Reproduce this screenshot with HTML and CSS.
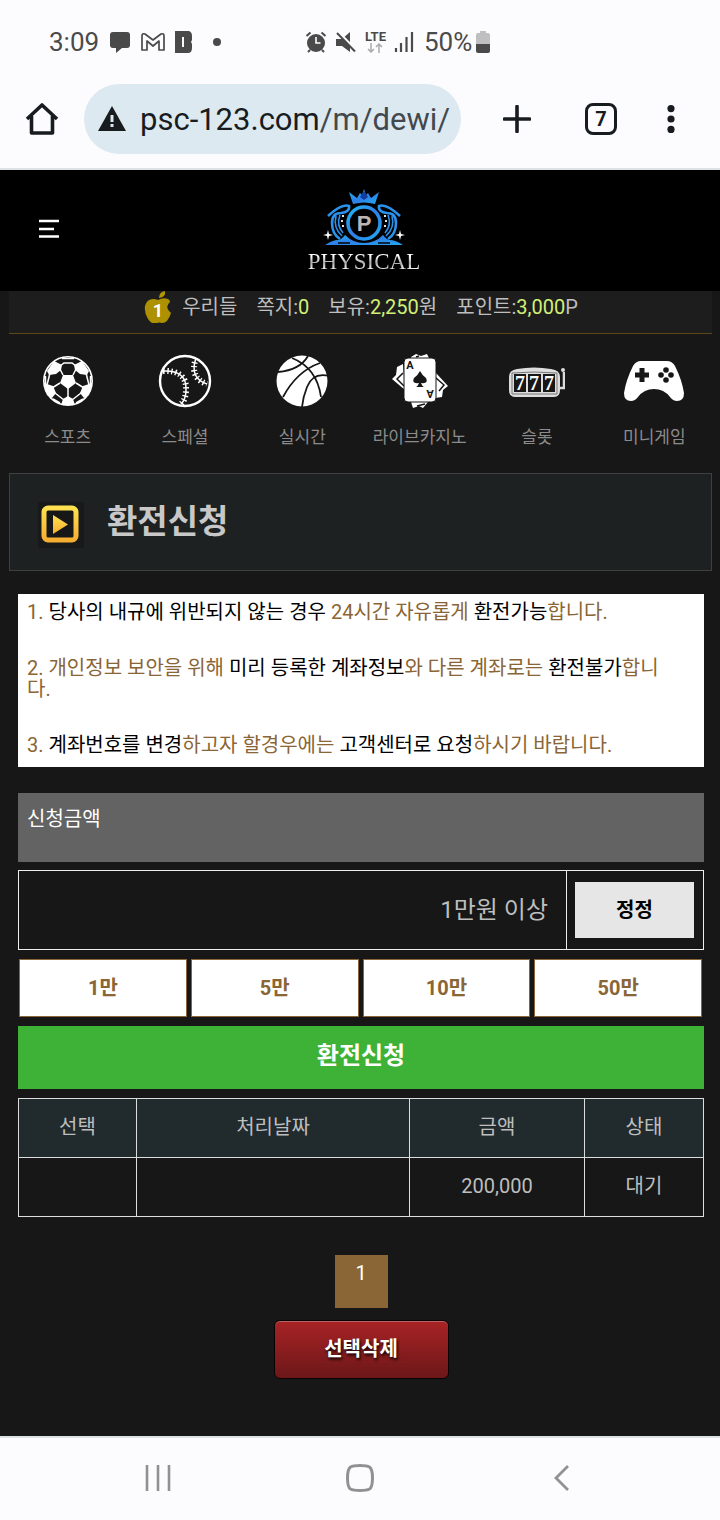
FILE: index.html
```
<!DOCTYPE html>
<html lang="ko">
<head>
	<meta charset="UTF-8" />
	<meta name="viewport" content="width=device-width, initial-scale=1" />
	<title>환전신청</title>
	<link rel="stylesheet" href="styles.css">
</head>
<body>
	<div class="status">
		<div class="status-left">
			<span class="time">3:09</span>
			<svg width="22" height="22" viewBox="0 0 22 22"><path d="M4 1h14q3 0 3 3v10q0 3-3 3h-5l-6 5v-5H4q-3 0-3-3V4q0-3 3-3z" fill="#4a4a4a"/></svg>
			<svg width="24" height="20" viewBox="0 0 24 20"><path d="M1 18V4q0-3 3-2l8 6 8-6q3-1 3 2v14h-5V9l-6 5-6-5v9z" fill="none" stroke="#4a4a4a" stroke-width="1.7" stroke-linejoin="round"/></svg>
			<svg width="18" height="24" viewBox="0 0 18 24"><path d="M0 1h14q3 1 3 5v4l-1 2 1 2v4q0 5-4 5H0zM7 7v10h2V7z" fill="#4a4a4a" fill-rule="evenodd"/></svg>
			<i class="dot"></i>
		</div>
		<div class="status-right">
			<svg width="22" height="22" viewBox="0 0 22 22" fill="none" stroke="#4a4a4a"><circle cx="11" cy="12" r="9" fill="#4a4a4a" stroke="none"/><path d="M1.5 5l4-3.5M20.5 5l-4-3.5M5 19l-2 2M17 19l2 2" stroke-width="2"/><path d="M11 6v6h4.500" stroke="#fff" stroke-width="1.6"/></svg>
			<svg width="22" height="22" viewBox="0 0 22 22"><path d="M1 8h6l8-7v20l-8-6H1z" fill="#4a4a4a"/><path d="M2 0l20 20.500" stroke="#fcfcfe" stroke-width="3"/><path d="M2 2l18 18.500" stroke="#4a4a4a" stroke-width="2"/></svg>
			<span class="lte">LTE<svg width="16" height="10" viewBox="0 0 16 10"><path d="M4 0v9M1 6l3 3 3-3M12 10V1M9 4l3-3 3 3" fill="none" stroke="#aaa" stroke-width="1.5"/></svg></span>
			<svg width="20" height="20" viewBox="0 0 20 20"><path d="M2 16v4M7 11v9M12.500 5v15M18 0v20" stroke="#4a4a4a" stroke-width="2.2"/></svg>
			<span class="battery-text">50%</span>
			<svg class="battery" width="14" height="22" viewBox="0 0 14 22"><path d="M4 0h6v2h2q2 0 2 2v9H0V4q0-2 2-2h2z" fill="#bfbfc1"/><path d="M0 13h14v7q0 2-2 2H2q-2 0-2-2z" fill="#4a4a4a"/></svg>
		</div>
	</div>
	<div class="browser">
		<button class="tool" aria-label="홈"><svg width="34" height="34" viewBox="0 0 34 34"><path d="M2 17L17 3l15 14M6.500 14v17h21V14" fill="none" stroke="#181c1f" stroke-width="3.6" stroke-linejoin="round"/></svg></button>
		<div class="address">
			<svg width="28" height="26" viewBox="0 0 28 26"><path d="M14 0l14 25H0z" fill="#181c1f"/><path d="M14 9v7M14 18v3" stroke="#dde9f0" stroke-width="3"/></svg>
			<span>psc-123.com<em>/m/dewi/</em></span>
		</div>
		<button class="tool plus" aria-label="새 탭"><svg width="28" height="28" viewBox="0 0 28 28"><path d="M14 1.500v25M1.500 14h25" stroke="#181c1f" stroke-width="3.6" stroke-linecap="round"/></svg></button>
		<button class="tool tabs">7</button>
		<button class="tool more" aria-label="메뉴"><svg width="8" height="28" viewBox="0 0 8 28" fill="#181c1f"><circle cx="4" cy="3.6" r="3.6"/><circle cx="4" cy="14" r="3.6"/><circle cx="4" cy="24.4" r="3.6"/></svg></button>
	</div>

	<div class="page">
		<div class="header">
			<button class="menu" aria-label="전체메뉴"><svg width="22" height="20" viewBox="0 0 22 20"><path d="M1 2h20M1 10h15M1 17.500h20" stroke="#fff" stroke-width="2.6"/></svg></button>
			<a href="#" class="logo">
				<svg width="84" height="60" viewBox="0 0 84 60" fill="none">
					<defs><linearGradient id="blue" x1="0" y1="0" x2="1" y2="1"><stop offset="0" stop-color="#20b8f4"/><stop offset=".5" stop-color="#2f7fe8"/><stop offset="1" stop-color="#22a9f0"/></linearGradient></defs>
					<path d="M31 17l-4-12 8 6 3-5 2 2 2-6 2 6 2-2 3 5 8-6-4 12q-11-3-22 0z" fill="url(#blue)"/>
					<path d="M38 10l4-6 4 6-4 3z" fill="#123c9c"/>
					<circle cx="42" cy="36" r="16" stroke="url(#blue)" stroke-width="3.5"/>
					<path d="M6 29Q20 16 27 19q1 6-8 7-9 0-9 10 0 11 8 16M78 29Q64 16 57 19q-1 6 8 7 9 0 9 10 0 11-8 16" stroke="#2b92ec" stroke-width="2.6"/>
					<path d="M14 29q-3 12 6 20M18 28q-4 10 3 18M70 29q3 12-6 20M66 28q4 10-3 18" stroke="#2b92ec" stroke-width="1.6"/>
					<path d="M3 58q8-5 13-5 3 0 7-5 8 8 19 8t19-8q4 5 7 5 5 0 13 5z" fill="url(#blue)"/>
					<path d="M16 56h12M68 56H56" stroke="#000" stroke-width="1.4"/>
					<path d="M6 43l1 4 4 1-4 1-1 4-1-4-4-1 4-1zM78 43l1 4 4 1-4 1-1 4-1-4-4-1 4-1z" fill="#fff"/>
					<path d="M21 28v2M20 33v2M21 38v2M63 28v2M64 33v2M63 38v2" stroke="#ddd" stroke-width="2"/>
					<text x="42" y="44" class="logo-p">P</text>
				</svg>
				<span class="logo-text">PHYSICAL</span>
			</a>
		</div>

		<div class="user">
			<svg width="30" height="32" viewBox="0 0 30 32"><path d="M16 7q0-6 6-7 1 6-6 7z" fill="#b39700"/><path d="M15 9q5-3 10-1 2 1 2 3-6 5 1 11-3 10-9 10-3-1-5 0-5 2-9-4-4-7-3-13 2-7 8-7 3 0 5 1z" fill="#ae9100"/><text x="15" y="26" class="level">1</text></svg>
			<span>우리들</span>
			<span>쪽지:<b>0</b></span>
			<span>보유:<b>2,250</b>원</span>
			<span>포인트:<b>3,000</b>P</span>
		</div>

		<div class="nav">
			<a href="#">
				<svg width="54" height="54" viewBox="0 0 54 54"><circle cx="27" cy="27" r="24.2" fill="#171717" stroke="#fff" stroke-width="1.6"/><path d="M22 21h10l3 8-8 6-8-6zM13 7l8 4-1 5-5 4-7 1-2-4zM41 7l-8 4 1 5 5 4 7 1 2-4zM3 29l9 3 3 7-4 5-5-3zM51 29l-9 3-3 7 4 5 5-3zM22 45l5-3 5 3 2 6H20z" fill="#fff"/><path d="M22 21l-3-6M32 21l3-6M19 29l-8 5M35 29l8 5M27 34v10M19 12l4-3h8l4 3M9 19L6 31M45 19l3 12M14 39l9 7M40 39l-9 7M21 4.500h12M4.500 22v9M49.500 22v9M12 45l7 4M42 45l-7 4" fill="none" stroke="#fff" stroke-width="1.5"/></svg>
				<span>스포츠</span>
			</a>
			<a href="#">
				<svg width="54" height="54" viewBox="0 0 54 54" fill="none" stroke="#fff"><circle cx="27" cy="27" r="25" stroke-width="2.4"/><path d="M5 17q24-1 23 19 0 9-5 14M38 4q-7 20 11 26" stroke-width="1.5"/><path d="M5 17q24-1 23 19 0 9-5 14M38 4q-7 20 11 26" stroke-width="6" stroke-dasharray="1.4 2.6"/></svg>
				<span>스페셜</span>
			</a>
			<a href="#">
				<svg width="54" height="54" viewBox="0 0 54 54"><circle cx="27" cy="27" r="25.500" fill="#fff"/><path d="M17 4q25 10 29 39M3 18q22-2 30-16M8 43Q22 17 45 9M27 53q1-10 5-20 6-15 22-11" fill="none" stroke="#171717" stroke-width="1.8"/></svg>
				<span>실시간</span>
			</a>
			<a href="#">
				<svg width="56" height="54" viewBox="0 0 56 54"><path d="M11 10l-6 3-1 8-4 4 13 11zM44 19l12 13-5 4-1 7-7 1zM19 3l5-3 5 2 6-2 3 6H19zM19 48h17l-5 6-4-2-6 2z" fill="#fff"/><path d="M11 19l-6 6 7 7M44 24l8 7-5 6M24 3l3-1M25 52l8-2" fill="none" stroke="#171717" stroke-width="1.5"/><rect x="12" y="4" width="32" height="44" rx="4" fill="#fff" stroke="#171717"/><path d="M28 17q-2 4-6 7-3 6 5 5-1 3-3 4h8q-2-1-3-4 8 1 5-5-4-3-6-7z" fill="#171717"/><text x="18" y="15" class="ace">A</text><text x="-38" y="-36" transform="rotate(180)" class="ace">A</text></svg>
				<span>라이브카지노</span>
			</a>
			<a href="#">
				<svg width="56" height="54" viewBox="0 0 56 54"><path d="M8 15q17-3 34 0 9 1 9 8v13q0 7-6 7H6q-6 0-6-7V23q0-7 8-8z" fill="#ddd"/><path d="M3 19q22-2 45 0v21H3z" fill="none" stroke="#777"/><path d="M5 20h12v18H5zM19 20h13v18H19zM34 20h12v18H34z" fill="#171717"/><text x="11" y="36" class="seven">7</text><text x="25" y="36" class="seven">7</text><text x="40" y="36" class="seven">7</text><path d="M51 34h4V18" fill="none" stroke="#ddd" stroke-width="2.5"/><circle cx="54" cy="16" r="2" fill="#ddd"/></svg>
				<span>슬롯</span>
			</a>
			<a href="#">
				<svg width="60" height="54" viewBox="0 0 60 54"><path d="M17 7h26q5 0 8 5 7 14 9 27 0 8-7 8-4 0-7-4-6-8-16-8t-16 8q-3 4-7 4-7 0-7-8 2-13 9-27 3-5 8-5z" fill="#fff"/><path d="M18 14v14M11 21h14" stroke="#171717" stroke-width="5"/><g fill="#171717"><circle cx="42" cy="16" r="2.800"/><circle cx="42" cy="26" r="2.800"/><circle cx="37" cy="21" r="2.800"/><circle cx="47" cy="21" r="2.800"/></g></svg>
				<span>미니게임</span>
			</a>
		</div>

		<div class="title">
			<svg width="46" height="46" viewBox="0 0 46 46"><defs><linearGradient id="gold" x2="0" y2="1"><stop offset="0" stop-color="#ffe14f"/><stop offset="1" stop-color="#f5ae32"/></linearGradient></defs><path d="M0 0h46v46H0z" fill="#171a19"/><rect x="6" y="6" width="32" height="32" rx="4" fill="#171717" stroke="url(#gold)" stroke-width="5"/><path d="M15 13l15 9.500-15 9.500z" fill="url(#gold)"/></svg>
			<h1>환전신청</h1>
		</div>

		<div class="content">
			<div class="notice">
				<p>1. <b>당사의 내규에 위반되지 않는 경우</b> 24시간 자유롭게 <b>환전가능</b>합니다.</p>
				<p>2. 개인정보 보안을 위해 <b>미리 등록한 계좌정보</b>와 다른 계좌로는 <b>환전불가</b>합니다.</p>
				<p>3. <b>계좌번호를 변경</b>하고자 할경우에는 <b>고객센터로 요청</b>하시기 바랍니다.</p>
			</div>
			<form>
				<label class="label" for="money">신청금액</label>
				<div class="money">
					<input type="text" id="money" placeholder="1만원 이상" />
					<div class="reset"><button type="reset">정정</button></div>
				</div>
				<div class="amounts">
					<button type="button">1만</button>
					<button type="button">5만</button>
					<button type="button">10만</button>
					<button type="button">50만</button>
				</div>
				<button type="button" class="submit">환전신청</button>
			</form>
			<table class="list">
				<tr><th class="col-check">선택</th><th class="col-date">처리날짜</th><th class="col-money">금액</th><th>상태</th></tr>
				<tr><td></td><td></td><td>200,000</td><td>대기</td></tr>
			</table>
			<div class="paging"><a href="#">1</a></div>
			<button type="button" class="delete">선택삭제</button>
		</div>
	</div>

	<div class="navbar">
		<button aria-label="최근 앱"><svg width="28" height="28" viewBox="0 0 28 28"><path d="M3 1v26M14 1v26M25 1v26" stroke="#919193" stroke-width="2.6"/></svg></button>
		<button aria-label="홈 화면"><svg width="28" height="28" viewBox="0 0 28 28"><path d="M14 1.500q7 0 9.500 1.500 3 2 3 11t-3 11q-2.500 1.500-9.500 1.500T4.500 25q-3-2-3-11t3-11Q7 1.500 14 1.500z" fill="none" stroke="#919193" stroke-width="3"/></svg></button>
		<button aria-label="뒤로"><svg width="28" height="28" viewBox="0 0 28 28"><path d="M20 2L8 14l12 12" fill="none" stroke="#919193" stroke-width="2.8"/></svg></button>
	</div>
</body>
</html>
```
FILE: styles.css
```
*{
	box-sizing:border-box;
}
body{
	margin:0;
	min-height:100vh;
	display:flex;
	flex-direction:column;
	background:#171717;
	font-family:Roboto,"Noto Sans CJK KR",sans-serif;
	font-size:20px;
	line-height:24px;
	color:#bebebe;
}
button,input{
	font-family:inherit;
	font-size:20px;
	border:0;
	padding:0;
	background:none;
}
button{
	cursor:pointer;
}
svg{
	display:block;
	flex:none;
}
a{
	color:inherit;
	text-decoration:none;
}
.status{
	display:flex;
	height:84px;
	background:#fcfcfe;
	color:#4a4a4a;
	font-size:26px;
	padding-left:49px;
}
.status-left,.status-right{
	display:flex;
	align-items:center;
	gap:8px;
}
.status-left{
	width:256px;
}
.status-left svg{
	margin-left:2px;
}
.dot{
	width:8px;
	height:8px;
	margin-left:12px;
	border-radius:50%;
	background:#4a4a4a;
}
.lte{
	display:flex;
	flex-direction:column;
	align-items:center;
	font-size:13px;
	font-weight:bold;
	line-height:12px;
}
.battery-text{
	margin-left:2px;
}
.battery{
	margin-left:-4px;
}
.browser{
	display:flex;
	align-items:flex-start;
	height:86px;
	background:#fcfcfe;
	border-bottom:2px solid #dde2e7;
}
.tool{
	display:flex;
	align-items:center;
	justify-content:center;
	width:84px;
	height:70px;
}
.address{
	flex:1;
	display:flex;
	align-items:center;
	gap:14px;
	height:70px;
	padding-left:14px;
	border-radius:35px;
	background:#dde9f0;
	color:#181c1f;
	font-size:31px;
	line-height:36px;
	white-space:nowrap;
	overflow:hidden;
}
.address span{
	padding-top:2px;
}
.address em{
	font-style:normal;
	color:#42494e;
}
.plus{
	width:112px;
}
.tabs{
	width:32px;
	height:32px;
	margin:19px 12px 0;
	border:3px solid #181c1f;
	border-radius:8px;
	color:#181c1f;
	font-weight:bold;
}
.more{
	width:91px;
	padding-right:8px;
}
.page{
	flex:1;
}
.header{
	display:grid;
	grid-template-columns:1fr auto 1fr;
	height:121px;
	background:#000;
}
.menu{
	width:98px;
	display:flex;
	align-items:center;
	justify-content:center;
	padding-bottom:4px;
}
.logo{
	display:flex;
	flex-direction:column;
	align-items:center;
	padding:17px 0 0 8px;
}
.logo-text{
	font-family:"Liberation Serif",serif;
	font-size:23px;
	line-height:29px;
	background:linear-gradient(#fff 30%,#aaa 55%,#fff 80%);
	-webkit-background-clip:text;
	color:transparent;
}
.logo-p{
	font:bold 22px "Liberation Sans",sans-serif;
	text-anchor:middle;
	fill:#bdb5b5;
}
.user{
	display:flex;
	justify-content:center;
	gap:19px;
	height:43px;
	margin:0 8px 0 9px;
	padding-top:4px;
	background:#1d1d1d;
	border-bottom:1px solid #5f4719;
}
.user svg{
	margin:-4px -10px 0 0;
}
.user b{
	font-weight:normal;
	color:#d2ef77;
}
.level{
	font:bold 18px Roboto,sans-serif;
	text-anchor:middle;
	fill:#fff;
}
.nav{
	display:grid;
	grid-template-columns:repeat(6,1fr);
	height:139px;
	margin:0 7px 0 9px;
	padding-top:20px;
	color:#8b8b8b;
	font-size:17px;
}
.nav a{
	display:flex;
	flex-direction:column;
	align-items:center;
	gap:17px;
}
.ace{
	font:bold 11px Roboto,sans-serif;
	text-anchor:middle;
	fill:#171717;
}
.seven{
	font:bold 20px "Liberation Serif",serif;
	text-anchor:middle;
	fill:#fff;
}
.title{
	display:flex;
	align-items:flex-start;
	gap:23px;
	height:98px;
	margin:0 8px 0 9px;
	padding:28px 28px 0;
	background:#1d2122;
	border:1px solid #3f3f3f;
}
.title h1{
	margin:0;
	font-size:33px;
	line-height:40px;
	color:#c8c8c8;
}
.content{
	margin:23px 16px 0 18px;
	padding-bottom:56px;
}
.notice{
	padding:8px 30px 11px 9px;
	background:#fff;
	color:#8a6535;
	line-height:21px;
}
.notice p{
	margin:0 0 35px;
	word-break:break-all;
}
.notice p:last-child{
	margin:0;
}
.notice b{
	font-weight:normal;
	color:#000;
}
.label{
	display:block;
	height:69px;
	margin:26px 0 8px;
	padding:14px 9px;
	background:#636363;
	color:#fff;
}
.money{
	display:flex;
	height:80px;
	border:1px solid #eee;
}
.money input{
	flex:1;
	min-width:0;
	padding:0 18px;
	text-align:right;
	font-size:24px;
	color:#bebebe;
}
.money input::placeholder{
	color:#bebebe;
	opacity:1;
}
.reset{
	padding:11px 9px 11px 8px;
	border-left:1px solid #eee;
}
.reset button{
	width:119px;
	height:56px;
	padding-bottom:4px;
	background:#e6e6e6;
	color:#000;
	font-weight:bold;
}
.amounts{
	display:grid;
	grid-template-columns:repeat(4,1fr);
	gap:4px;
	margin:9px 2px 9px 1px;
}
.amounts button{
	height:58px;
	padding-bottom:4px;
	border:1px solid #8a6535;
	background:#fff;
	color:#8a6535;
	font-weight:bold;
}
.submit{
	display:block;
	width:100%;
	height:63px;
	padding-bottom:8px;
	background:#3db237;
	color:#fff;
	font-size:24px;
	font-weight:bold;
}
.list{
	width:100%;
	margin-top:9px;
	border-collapse:collapse;
	table-layout:fixed;
	text-align:center;
}
.list th,.list td{
	height:59px;
	padding:0 0 2px;
	border:1px solid #ddd;
	font-weight:normal;
}
.list th{
	background:#212a2d;
}
.col-check{
	width:118px;
}
.col-date{
	width:273px;
}
.col-money{
	width:175px;
}
.paging{
	display:flex;
	justify-content:center;
	margin:38px 0 12px;
}
.paging a{
	width:53px;
	height:53px;
	padding-top:6px;
	background:#8a6535;
	color:#fff;
	text-align:center;
}
.delete{
	display:block;
	width:175px;
	height:59px;
	margin:0 auto;
	padding-bottom:4px;
	border:1px solid #0a0202;
	border-radius:6px;
	background:linear-gradient(#a82325,#6c1719);
	box-shadow:inset 0 1px 0 #b56566;
	color:#fff;
	font-weight:bold;
	text-shadow:1px 2px 3px #000;
}
.navbar{
	display:flex;
	height:84px;
	padding:0 57px 3px;
	background:#fcfcfe;
	border-top:2px solid #dde2e7;
}
.navbar button{
	flex:1;
	display:flex;
	align-items:center;
	justify-content:center;
}
```
